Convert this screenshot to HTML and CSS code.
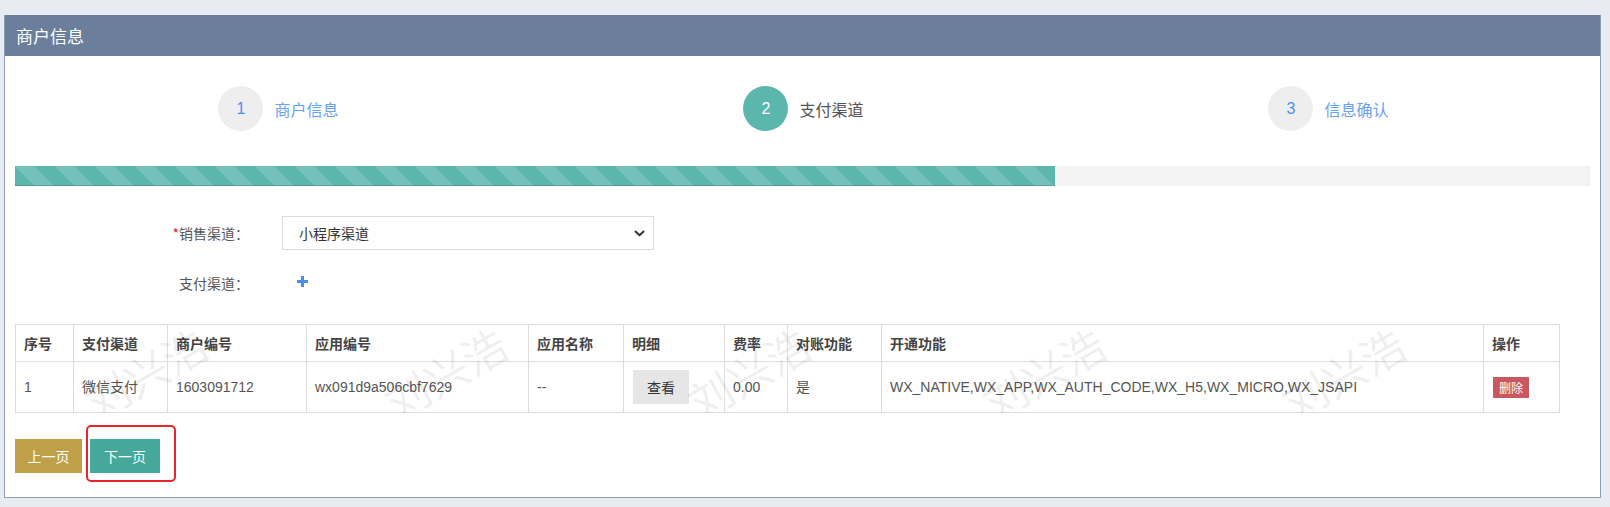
FILE: index.html
```html
<!DOCTYPE html>
<html lang="zh-CN">
<head>
<meta charset="utf-8">
<title>商户信息</title>
<link rel="stylesheet" href="styles.css">
</head>
<body>
<div class="page">
  <div class="panel">
    <div class="panel-heading">商户信息</div>
    <div class="panel-body">
      <div class="steps">
        <div class="step"><span class="step-num">1</span><span class="step-label">商户信息</span></div>
        <div class="step active"><span class="step-num">2</span><span class="step-label">支付渠道</span></div>
        <div class="step"><span class="step-num">3</span><span class="step-label">信息确认</span></div>
      </div>
      <div class="progress"><div class="progress-bar" style="width:66%"></div></div>

      <div class="form">
        <div class="form-row">
          <label class="form-label"><span class="req">*</span>销售渠道：</label>
          <div class="select-wrap">
            <select class="select">
              <option>小程序渠道</option>
            </select>
            <svg class="chevron" width="11" height="7" viewBox="0 0 11 7"><path d="M1.5 1.5 L5.5 5.2 L9.5 1.5" fill="none" stroke="#333" stroke-width="2" stroke-linecap="round" stroke-linejoin="round"/></svg>
          </div>
        </div>
        <div class="form-row">
          <label class="form-label">支付渠道：</label>
          <span class="add-btn"><svg width="11" height="11" viewBox="0 0 11 11"><path d="M5.5 0 V11 M0 5.5 H11" stroke="#4a8ef0" stroke-width="3"/></svg></span>
        </div>
      </div>

      <div class="table-wrap">
        <table class="grid">
          <colgroup>
            <col class="c1"><col class="c2"><col class="c3"><col class="c4"><col class="c5">
            <col class="c6"><col class="c7"><col class="c8"><col class="c9"><col class="c10">
          </colgroup>
          <thead>
            <tr>
              <th>序号</th><th>支付渠道</th><th>商户编号</th><th>应用编号</th><th>应用名称</th>
              <th>明细</th><th>费率</th><th>对账功能</th><th>开通功能</th><th>操作</th>
            </tr>
          </thead>
          <tbody>
            <tr>
              <td>1</td>
              <td>微信支付</td>
              <td>1603091712</td>
              <td>wx091d9a506cbf7629</td>
              <td>--</td>
              <td><button class="btn-view">查看</button></td>
              <td>0.00</td>
              <td>是</td>
              <td>WX_NATIVE,WX_APP,WX_AUTH_CODE,WX_H5,WX_MICRO,WX_JSAPI</td>
              <td><button class="btn-del">删除</button></td>
            </tr>
          </tbody>
        </table>
        <div class="watermarks" aria-hidden="true">
          <span class="wm" style="left:130px">刘兴浩</span>
          <span class="wm" style="left:430px">刘兴浩</span>
          <span class="wm" style="left:733px">刘兴浩</span>
          <span class="wm" style="left:1028px">刘兴浩</span>
          <span class="wm" style="left:1328px">刘兴浩</span>
        </div>
      </div>

      <div class="actions">
        <button class="btn btn-prev">上一页</button>
        <button class="btn btn-next">下一页</button>
        <div class="highlight"></div>
      </div>
    </div>
  </div>
</div>
</body>
</html>
```
FILE: styles.css
```css
html, body {
  margin: 0;
  padding: 0;
}
body {
  background: #e8ebf2;
  font-family: "Liberation Sans", "Noto Sans CJK SC", sans-serif;
  font-size: 14px;
  color: #555;
}
.page {
  padding: 15px 9px 10px 4px;
}
.panel {
  border: 1px solid #8e9ebb;
  border-top: none;
  background: #fff;
}
.panel-heading {
  height: 41px;
  line-height: 41px;
  background: #6b7f9d;
  color: #fff;
  font-family: "Noto Sans CJK SC", sans-serif;
  font-size: 17px;
  padding-left: 11px;
}
.panel-body {
  padding: 30px 10px 24px 10px;
}

/* steps */
.steps {
  display: grid;
  grid-template-columns: repeat(3, 1fr);
}
.step {
  display: flex;
  align-items: center;
  justify-content: center;
  gap: 11px;
  padding-left: 2px;
}
.step-num {
  width: 45px;
  height: 45px;
  border-radius: 50%;
  background: #eeeeee;
  color: #4d8ef0;
  font-size: 16px;
  display: flex;
  align-items: center;
  justify-content: center;
}
.step-label {
  font-family: "Noto Sans CJK SC", sans-serif;
  font-size: 16px;
  color: #6aa2f5;
}
.step.active .step-num {
  background: #5bb6ab;
  color: #fff;
}
.step.active .step-label {
  color: #555;
}

/* progress */
.progress {
  margin-top: 35px;
  height: 20px;
  background: #f3f3f3;
}
.progress-bar {
  height: 20px;
  background-color: #5bb6ab;
  background-image: linear-gradient(45deg, rgba(255,255,255,.15) 25%, transparent 25%, transparent 50%, rgba(255,255,255,.15) 50%, rgba(255,255,255,.15) 75%, transparent 75%, transparent);
  background-size: 40px 40px;
  box-shadow: inset 0 -1px 0 rgba(0,0,0,.15);
}

/* form */
.form {
  margin-top: 30px;
  display: flex;
  flex-direction: column;
  gap: 16px;
}
.form-row {
  display: flex;
  align-items: center;
  height: 34px;
}
.form-label {
  width: 234px;
  text-align: right;
  color: #555;
  font-family: "Noto Sans CJK SC", sans-serif;
  margin-right: 33px;
}
.req {
  color: #e0202a;
}
.select-wrap {
  position: relative;
  width: 372px;
  height: 34px;
}
.select {
  -webkit-appearance: none;
  appearance: none;
  width: 100%;
  height: 34px;
  border: 1px solid #dcdcdc;
  background: #fff;
  padding: 0 16px;
  font-family: "Noto Sans CJK SC", sans-serif;
  font-size: 14px;
  color: #333;
  border-radius: 0;
  outline: none;
}
.chevron {
  position: absolute;
  right: 9px;
  top: 14px;
}
.add-btn {
  margin-left: 15px;
  display: inline-flex;
  margin-top: -4px;
}

/* table */
.table-wrap {
  position: relative;
  margin-top: 24px;
  width: 1545px;
}
.grid {
  width: 1544px;
  border-collapse: collapse;
  table-layout: fixed;
}
.c1 { width: 58px; }
.c2 { width: 94px; }
.c3 { width: 139px; }
.c4 { width: 222px; }
.c5 { width: 95px; }
.c6 { width: 101px; }
.c7 { width: 63px; }
.c8 { width: 94px; }
.c9 { width: 602px; }
.c10 { width: 76px; }
.grid th, .grid td {
  border: 1px solid #dddddd;
  padding: 8px;
  text-align: left;
  vertical-align: middle;
  white-space: nowrap;
  line-height: 20px;
}
.grid th {
  font-family: "Noto Sans CJK SC", sans-serif;
  font-weight: bold;
  color: #444;
  height: 20px;
}
.grid td {
  color: #555;
  font-family: "Liberation Sans", "Noto Sans CJK SC", sans-serif;
}
.btn-view {
  width: 56px;
  height: 34px;
  border: none;
  background: #e6e6e6;
  color: #333;
  font-family: "Noto Sans CJK SC", sans-serif;
  font-size: 14px;
  padding: 0;
  margin-left: 1px;
}
.btn-del {
  width: 36px;
  height: 21px;
  border: none;
  background: #c8575f;
  color: #fff;
  font-family: "Noto Sans CJK SC", sans-serif;
  font-size: 12px;
  padding: 0;
  margin-left: 1px;
}
.watermarks {
  position: absolute;
  left: 0;
  top: 0;
  width: 1544px;
  bottom: 0;
  overflow: hidden;
  pointer-events: none;
}
.wm {
  position: absolute;
  top: 48px;
  font-family: "Noto Sans CJK SC", sans-serif;
  font-size: 44px;
  line-height: 44px;
  color: rgba(0,0,0,.075);
  white-space: nowrap;
  transform: translate(-50%, -50%) rotate(-30deg);
}

/* actions */
.actions {
  position: relative;
  margin-top: 26px;
  display: flex;
  gap: 8px;
}
.btn {
  height: 34px;
  border: none;
  color: #fff;
  font-family: "Noto Sans CJK SC", sans-serif;
  font-size: 14px;
  padding: 0;
}
.btn-prev {
  width: 67px;
  background: #bf9f48;
}
.btn-next {
  width: 70px;
  background: #45a89a;
}
.highlight {
  position: absolute;
  left: 71px;
  top: -14px;
  width: 86px;
  height: 53px;
  border: 2px solid #e8262c;
  border-radius: 5px;
  pointer-events: none;
}
```
